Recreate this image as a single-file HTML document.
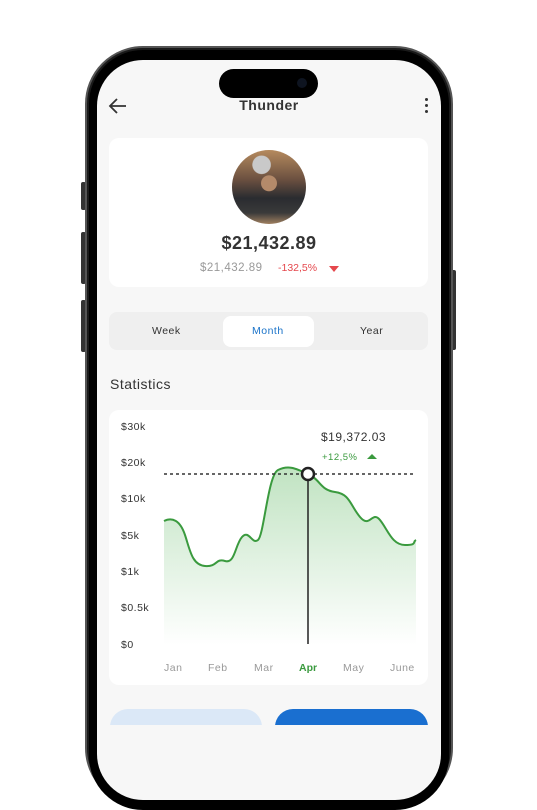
<!DOCTYPE html>
<html><head><meta charset="utf-8"><style>
*{margin:0;padding:0;box-sizing:border-box}
body{width:537px;height:725px;background:#fff;position:relative;overflow:hidden;font-family:"Liberation Sans",sans-serif}
.abs{position:absolute}
</style></head><body>
<!-- side buttons -->
<div class="abs" style="left:81px;top:182px;width:5px;height:28px;background:#333;border-radius:2px"></div>
<div class="abs" style="left:81px;top:232px;width:5px;height:52px;background:#333;border-radius:2px"></div>
<div class="abs" style="left:81px;top:300px;width:5px;height:52px;background:#333;border-radius:2px"></div>
<div class="abs" style="left:451px;top:270px;width:5px;height:80px;background:#333;border-radius:2px"></div>
<!-- frame -->
<div class="abs" style="left:85px;top:46px;width:368px;height:760px;background:#1a1a1a;border-radius:58px;border:2px solid #555"></div>
<div class="abs" style="left:89px;top:50px;width:360px;height:760px;background:#000;border-radius:54px"></div>
<div class="abs" style="left:97px;top:60px;width:344px;height:740px;background:#f7f7f7;border-radius:46px;overflow:hidden">
  <div class="abs" style="left:122px;top:9px;width:99px;height:29px;background:#000;border-radius:15px"></div>
  <div class="abs" style="left:200px;top:18px;width:10px;height:10px;background:#0e1420;border-radius:50%"></div>
  <svg class="abs" style="left:10px;top:36px" width="22" height="20" viewBox="0 0 22 20"><path d="M19 10H4M10 3L3 10l7 7" fill="none" stroke="#333" stroke-width="1.8"/></svg>
  <div class="abs" style="left:0;width:344px;top:37px;text-align:center;font-size:14px;font-weight:bold;color:#333;letter-spacing:.5px">Thunder</div>
  <div class="abs" style="left:328px;top:38px;width:3px;height:3px;background:#333;border-radius:50%;box-shadow:0 6px 0 #333,0 12px 0 #333"></div>
  <!-- card -->
  <div class="abs" style="left:12px;top:78px;width:319px;height:149px;background:#fff;border-radius:10px"></div>
  <div class="abs" style="left:135px;top:90px;width:74px;height:74px;border-radius:50%;background:radial-gradient(circle at 40% 20%,#c9c9c9 0 12%,transparent 13%),radial-gradient(circle at 50% 45%,#b48a6a 0 14%,transparent 15%),linear-gradient(180deg,#b58a5e 0%,#6b5040 40%,#2a2c30 65%,#3a3a3a 85%,#a08060 100%)"></div>
  <div class="abs" style="left:0;width:344px;top:173px;text-align:center;font-size:18px;font-weight:bold;color:#333;letter-spacing:.5px">$21,432.89</div>
  <div class="abs" style="left:103px;top:202px;font-size:11.5px;color:#999;letter-spacing:.5px">$21,432.89</div>
  <div class="abs" style="left:181px;top:202px;font-size:10.5px;color:#e5484d">-132,5%</div>
  <div class="abs" style="left:232px;top:206px;width:0;height:0;border-left:5px solid transparent;border-right:5px solid transparent;border-top:6px solid #e5484d"></div>
  <!-- segmented -->
  <div class="abs" style="left:12px;top:252px;width:319px;height:38px;background:#efefef;border-radius:8px"></div>
  <div class="abs" style="left:126px;top:256px;width:91px;height:31px;background:#fff;border-radius:8px"></div>
  <div class="abs" style="left:55px;top:265px;font-size:10.5px;color:#333;letter-spacing:.5px">Week</div>
  <div class="abs" style="left:155px;top:265px;font-size:10.5px;color:#1a73c9;letter-spacing:.5px">Month</div>
  <div class="abs" style="left:263px;top:265px;font-size:10.5px;color:#333;letter-spacing:.5px">Year</div>
  <div class="abs" style="left:13px;top:316px;font-size:14px;color:#333;letter-spacing:.5px">Statistics</div>
  <div class="abs" style="left:12px;top:350px;width:319px;height:275px;background:#fff;border-radius:10px"></div>
</div>
<!-- chart -->
<svg class="abs" style="left:0;top:0" width="537" height="725">
<defs><linearGradient id="g" x1="0" y1="0" x2="0" y2="1"><stop offset="0" stop-color="#4caf50" stop-opacity=".35"/><stop offset="1" stop-color="#4caf50" stop-opacity="0"/></linearGradient></defs>
<g font-family="Liberation Sans" font-size="10.5" fill="#333" letter-spacing=".5">
<text x="121" y="430">$30k</text><text x="121" y="466">$20k</text><text x="121" y="502">$10k</text><text x="121" y="539">$5k</text><text x="121" y="575">$1k</text><text x="121" y="611">$0.5k</text><text x="121" y="648">$0</text>
</g>
<g font-family="Liberation Sans" font-size="10.5" fill="#999" letter-spacing=".5">
<text x="164" y="671">Jan</text><text x="208" y="671">Feb</text><text x="254" y="671">Mar</text><text x="343" y="671">May</text><text x="390" y="671">June</text>
</g>
<text x="299" y="671" font-family="Liberation Sans" font-size="10.5" font-weight="bold" fill="#3a9a3e">Apr</text>
<path d="M164 521C172 517 180 520 185 535S192 565 205 566S215 558 225 561S235 545 242 537S252 545 258 540S268 475 278 470S295 468 308 474S320 490 335 492S350 505 360 517S372 510 380 520S392 545 405 545S412 542 416 540L416 645L164 645Z" fill="url(#g)"/>
<path d="M164 521C172 517 180 520 185 535S192 565 205 566S215 558 225 561S235 545 242 537S252 545 258 540S268 475 278 470S295 468 308 474S320 490 335 492S350 505 360 517S372 510 380 520S392 545 405 545S412 542 416 540" fill="none" stroke="#3a9a3e" stroke-width="2"/>
<line x1="164" y1="474" x2="416" y2="474" stroke="#333" stroke-width="1.5" stroke-dasharray="3 3"/>
<line x1="308" y1="474" x2="308" y2="644" stroke="#222" stroke-width="1.5"/>
<circle cx="308" cy="474" r="6" fill="#fff" stroke="#222" stroke-width="2.5"/>
<text x="321" y="441" font-family="Liberation Sans" font-size="12" fill="#333" letter-spacing=".5">$19,372.03</text>
<text x="322" y="460" font-family="Liberation Sans" font-size="9.5" fill="#3a9a3e" letter-spacing=".5">+12,5%</text>
<path d="M367 459l5-5 5 5z" fill="#3a9a3e"/>
<rect x="110" y="709" width="152" height="40" rx="18" fill="#dbe8f7"/>
<rect x="275" y="709" width="153" height="40" rx="18" fill="#1a6fd0"/>
</svg>
</body></html>
